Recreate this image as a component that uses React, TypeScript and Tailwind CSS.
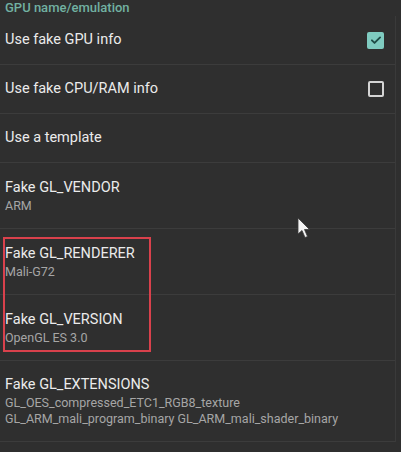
import React from "react";

type Item = {
  title: string;
  summary?: string[];
  check?: boolean;
};

const items: Item[] = [
  { title: "Use fake GPU info", check: true },
  { title: "Use fake CPU/RAM info", check: false },
  { title: "Use a template" },
  { title: "Fake GL_VENDOR", summary: ["ARM"] },
  { title: "Fake GL_RENDERER", summary: ["Mali-G72"] },
  { title: "Fake GL_VERSION", summary: ["OpenGL ES 3.0"] },
  {
    title: "Fake GL_EXTENSIONS",
    summary: [
      "GL_OES_compressed_ETC1_RGB8_texture",
      "GL_ARM_mali_program_binary GL_ARM_mali_shader_binary",
    ],
  },
];

function CheckBox({ checked }: { checked: boolean }) {
  if (checked) {
    return (
      <div className="w-[17px] h-[17px] rounded-[2px] bg-[#7fcbc0] flex items-center justify-center">
        <svg viewBox="0 0 24 24" className="w-[14px] h-[14px]" fill="none">
          <path
            d="M5 12.5l4.5 4.5L19 7.5"
            stroke="#1f4c46"
            strokeWidth="3.2"
            strokeLinecap="round"
            strokeLinejoin="round"
          />
        </svg>
      </div>
    );
  }
  return (
    <div className="w-[16px] h-[16px] rounded-[2px] border-2 border-[#d4d4d4]" />
  );
}

function Row({ item }: { item: Item }) {
  const twoLine = item.summary && item.summary.length > 1;
  const height = item.summary
    ? twoLine
      ? "h-[81px]"
      : "h-[66px]"
    : "h-[49px]";
  return (
    <div className={`flex items-center pl-[5px] pr-[11px] ${height} border-b border-[#3c3c3c]`}>
      <div className="flex-1 min-w-0">
        <div className="text-[14.5px] leading-[20px] text-[#ebebeb]">{item.title}</div>
        {item.summary?.map((line) => (
          <div key={line} className="text-[12.5px] leading-[16px] text-[#a6a6a6]">
            {line}
          </div>
        ))}
      </div>
      {item.check !== undefined && (
        <div className="w-[17px] flex justify-center">
          <CheckBox checked={item.check} />
        </div>
      )}
    </div>
  );
}

export default function App() {
  return (
    <div
      className="relative w-[401px] h-[452px] overflow-hidden bg-[#2f2f2f]"
      style={{ fontFamily: "Roboto, 'Liberation Sans', sans-serif" }}
    >
      <div className="h-[16px] pl-[5px] flex items-center text-[13px] font-medium text-[#72b1a2]">
        GPU name/emulation
      </div>
      <div className="w-[396px] border-r border-[#3a3a3a]">
        {items.map((item) => (
          <Row key={item.title} item={item} />
        ))}
      </div>

      {/* highlight box drawn over the renderer/version rows */}
      <div className="absolute left-[3px] top-[237px] w-[148px] h-[115px] border-2 border-[#d9414c]" />

      {/* mouse pointer */}
      <svg
        viewBox="0 0 14 22"
        className="absolute left-[297px] top-[217px] w-[14px] h-[22px]"
      >
        <path
          d="M1 1 L1 17 L5 13.5 L8 20.5 L10.5 19.5 L7.5 12.5 L12.5 12.5 Z"
          fill="#f4f4f4"
          stroke="#3a3a3a"
          strokeWidth="0.8"
          strokeLinejoin="round"
        />
      </svg>
    </div>
  );
}
